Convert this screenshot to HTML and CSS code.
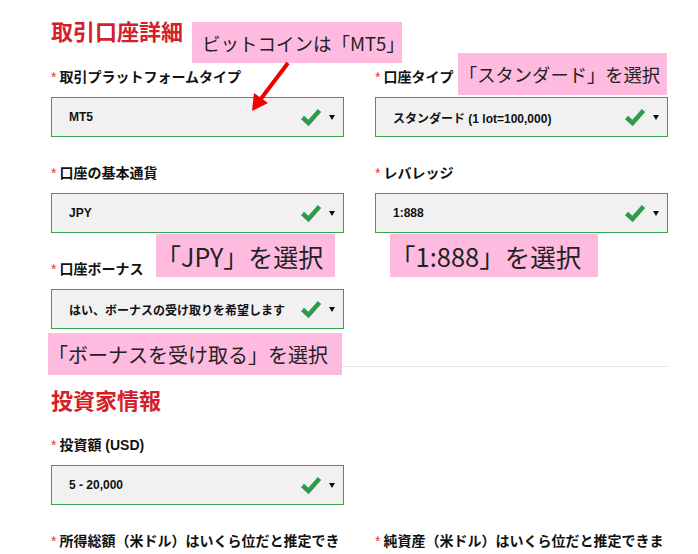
FILE: index.html
```html
<!DOCTYPE html>
<html lang="ja">
<head>
<meta charset="utf-8">
<title>取引口座詳細</title>
<link rel="stylesheet" href="styles.css">
</head>
<body>
<div class="page">
  <div class="form">
    <h2 class="section-title">取引口座詳細</h2>
    <div class="grid">
      <div class="field">
        <div class="label"><span class="req">*</span>取引プラットフォームタイプ</div>
        <div class="select"><span class="value">MT5</span><svg class="check" viewBox="0 0 20 18" width="20" height="18"><path d="M1.5 9.5 L7.5 15 L18.5 2.5" /></svg><span class="caret"></span></div>
      </div>
      <div class="field">
        <div class="label"><span class="req">*</span>口座タイプ</div>
        <div class="select"><span class="value">スタンダード (1 lot=100,000)</span><svg class="check" viewBox="0 0 20 18" width="20" height="18"><path d="M1.5 9.5 L7.5 15 L18.5 2.5" /></svg><span class="caret"></span></div>
      </div>
      <div class="field">
        <div class="label"><span class="req">*</span>口座の基本通貨</div>
        <div class="select"><span class="value">JPY</span><svg class="check" viewBox="0 0 20 18" width="20" height="18"><path d="M1.5 9.5 L7.5 15 L18.5 2.5" /></svg><span class="caret"></span></div>
      </div>
      <div class="field">
        <div class="label"><span class="req">*</span>レバレッジ</div>
        <div class="select"><span class="value">1:888</span><svg class="check" viewBox="0 0 20 18" width="20" height="18"><path d="M1.5 9.5 L7.5 15 L18.5 2.5" /></svg><span class="caret"></span></div>
      </div>
      <div class="field">
        <div class="label"><span class="req">*</span>口座ボーナス</div>
        <div class="select"><span class="value">はい、ボーナスの受け取りを希望します</span><svg class="check" viewBox="0 0 20 18" width="20" height="18"><path d="M1.5 9.5 L7.5 15 L18.5 2.5" /></svg><span class="caret"></span></div>
      </div>
    </div>
    <hr class="divider">
    <h2 class="section-title">投資家情報</h2>
    <div class="grid">
      <div class="field">
        <div class="label"><span class="req">*</span>投資額 (USD)</div>
        <div class="select"><span class="value">5 - 20,000</span><svg class="check" viewBox="0 0 20 18" width="20" height="18"><path d="M1.5 9.5 L7.5 15 L18.5 2.5" /></svg><span class="caret"></span></div>
      </div>
      <div class="field"></div>
      <div class="field">
        <div class="label"><span class="req">*</span>所得総額（米ドル）はいくら位だと推定できますか？</div>
      </div>
      <div class="field">
        <div class="label"><span class="req">*</span>純資産（米ドル）はいくら位だと推定できますか？</div>
      </div>
    </div>
  </div>

  <div class="note note-mt5">ビットコインは「MT5」</div>
  <div class="note note-std">「スタンダード」を選択</div>
  <div class="note note-jpy">「JPY」を選択</div>
  <div class="note note-lev">「1:888」を選択</div>
  <div class="note note-bonus">「ボーナスを受け取る」を選択</div>

  <svg class="pointer" viewBox="0 0 60 62" width="60" height="62">
    <line x1="48" y1="8" x2="20" y2="45" />
    <polygon points="12,56 14,38 28,48" />
  </svg>
</div>
</body>
</html>
```

FILE: styles.css
```css
body {
  margin: 0;
  background: #ffffff;
  font-family: "Liberation Sans", "Noto Sans CJK JP", sans-serif;
  color: #111;
}

.page {
  position: relative;
  width: 698px;
  height: 554px;
  overflow: hidden;
}

.form {
  padding: 18px 30px 0 51px;
}

.section-title {
  margin: 0 0 19px;
  font-size: 22px;
  line-height: 30px;
  font-weight: bold;
  color: #d21f2b;
}

.divider + .section-title {
  margin-bottom: 18px;
}

.grid {
  display: grid;
  grid-template-columns: 293px 293px;
  column-gap: 31px;
  row-gap: 26px;
}

.label {
  font-size: 14px;
  line-height: 20px;
  font-weight: bold;
  color: #111;
  margin-bottom: 10px;
}

.req {
  color: #e0393e;
  font-weight: normal;
  margin-right: 3px;
}

.select {
  height: 40px;
  box-sizing: border-box;
  border: 1px solid #3aa24d;
  background: #f1f1f1;
  display: flex;
  align-items: center;
  padding: 0 8px 0 17px;
  font-size: 12px;
  font-weight: bold;
  color: #111;
}

.value {
  flex: 1;
  white-space: nowrap;
}

.check {
  margin-right: 8px;
}

.check path {
  fill: none;
  stroke: #2e9b48;
  stroke-width: 4.5;
}

.caret {
  width: 0;
  height: 0;
  border-left: 3px solid transparent;
  border-right: 3px solid transparent;
  border-top: 5px solid #111;
}

.divider {
  margin: 37px 0 20px;
  border: 0;
  border-top: 1px solid #e6e6e6;
  height: 0;
}

.note {
  position: absolute;
  background: #ffbbdf;
  color: #222;
  font-family: "Noto Sans CJK JP", sans-serif;
  font-weight: normal;
  display: flex;
  align-items: center;
  box-sizing: border-box;
  white-space: nowrap;
}

.note-mt5 {
  left: 192px;
  top: 22px;
  width: 210px;
  height: 41px;
  font-size: 18.5px;
  padding-left: 10px;
}

.note-std {
  left: 458px;
  top: 53px;
  width: 209px;
  height: 42px;
  font-size: 18.3px;
  padding-left: 1px;
}

.note-jpy {
  left: 156px;
  top: 234px;
  width: 179px;
  height: 43px;
  font-size: 25px;
  padding-left: 0;
}

.note-lev {
  left: 390px;
  top: 234px;
  width: 208px;
  height: 43px;
  font-size: 25.5px;
  padding-left: 0;
}

.note-bonus {
  left: 48px;
  top: 333px;
  width: 294px;
  height: 42px;
  font-size: 20px;
  padding-left: 0;
}

.pointer {
  position: absolute;
  left: 240px;
  top: 55px;
}

.pointer line {
  stroke: #f00000;
  stroke-width: 4;
}

.pointer polygon {
  fill: #f00000;
}
```
